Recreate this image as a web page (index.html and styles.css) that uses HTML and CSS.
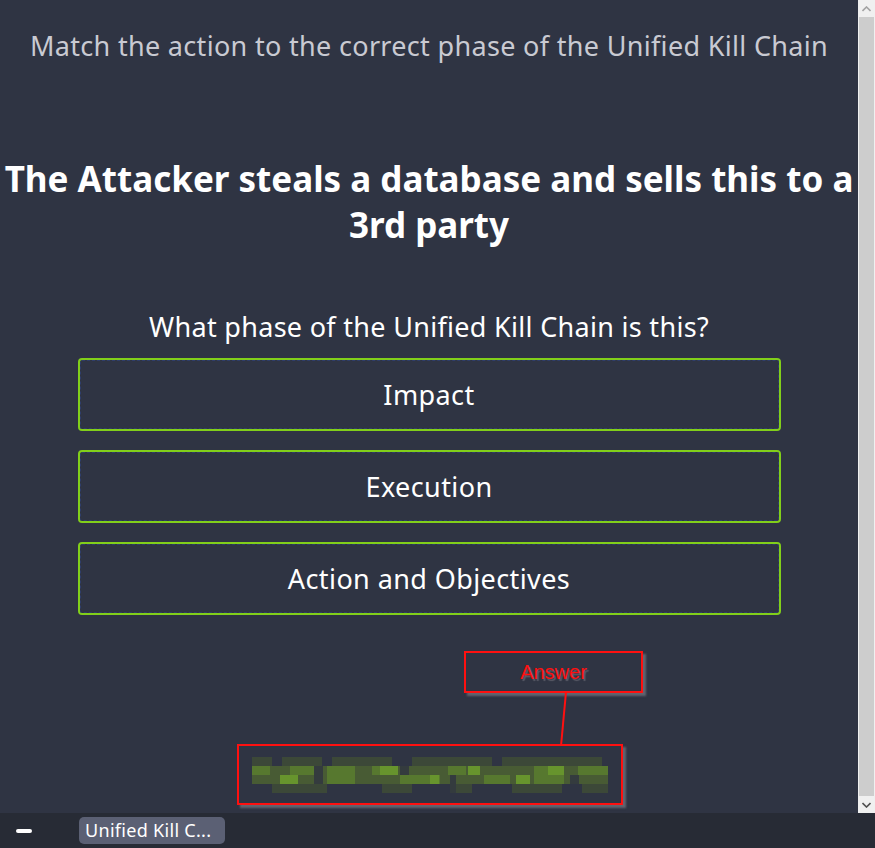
FILE: index.html
```html
<!DOCTYPE html>
<html>
<head>
<meta charset="utf-8">
<link rel="stylesheet" href="styles.css">
</head>
<body>
<div class="window">
  <div class="viewport">
    <main class="content">
      <p class="subtitle">Match the action to the correct phase of the Unified Kill Chain</p>
      <h1 class="scenario">The Attacker steals a database and sells this to a 3rd party</h1>
      <p class="question">What phase of the Unified Kill Chain is this?</p>
      <div class="options">
        <button class="option">Impact</button>
        <button class="option">Execution</button>
        <button class="option">Action and Objectives</button>
      </div>
      <div class="annotation">
        <div class="answer-label">Answer</div>
        <svg class="connector" width="20" height="54" viewBox="0 0 20 54"><line x1="12" y1="0" x2="7" y2="54" stroke="#ff1010" stroke-width="2"/></svg>
        <div class="answer-box">
          <svg class="pixels" width="356" height="36" viewBox="0 0 356 36" shape-rendering="crispEdges">
            <g fill="#4a5e34">
              <rect x="0" y="9" width="356" height="18"/>
            </g>
            <g fill="#3d4a38">
              <rect x="0" y="0" width="20" height="9"/><rect x="30" y="0" width="40" height="9"/><rect x="80" y="0" width="60" height="9"/><rect x="160" y="0" width="80" height="9"/><rect x="250" y="0" width="100" height="9"/>
              <rect x="20" y="27" width="55" height="9"/><rect x="130" y="27" width="30" height="9"/><rect x="200" y="27" width="20" height="9"/><rect x="260" y="27" width="50" height="9"/><rect x="330" y="27" width="26" height="9"/>
            </g>
            <g fill="#5a7c2e">
              <rect x="0" y="9" width="18" height="9"/><rect x="38" y="9" width="28" height="9"/><rect x="75" y="9" width="28" height="18"/><rect x="120" y="9" width="18" height="9"/><rect x="148" y="18" width="40" height="9"/><rect x="196" y="9" width="18" height="9"/><rect x="232" y="18" width="26" height="9"/><rect x="282" y="9" width="30" height="18"/><rect x="326" y="9" width="30" height="9"/>
            </g>
            <g fill="#6a9a2c">
              <rect x="28" y="18" width="18" height="9"/><rect x="128" y="9" width="18" height="9"/><rect x="178" y="18" width="9" height="9"/><rect x="216" y="9" width="12" height="9"/><rect x="296" y="9" width="16" height="9"/><rect x="264" y="18" width="14" height="9"/>
            </g>
            <g fill="#353c3e">
              <rect x="62" y="9" width="9" height="18"/><rect x="148" y="9" width="9" height="9"/><rect x="198" y="18" width="6" height="18"/><rect x="318" y="18" width="9" height="9"/>
            </g>
          </svg>
        </div>
      </div>
    </main>
    <div class="scrollbar">
      <div class="sb-arrow">
        <svg width="9" height="6" viewBox="0 0 9 6"><path d="M0.5 5 L4.5 1 L8.5 5" fill="none" stroke="#a3a3a3" stroke-width="1.6"/></svg>
      </div>
      <div class="sb-thumb"></div>
      <div class="sb-arrow">
        <svg width="9" height="6" viewBox="0 0 9 6"><path d="M0.5 1 L4.5 5 L8.5 1" fill="none" stroke="#505050" stroke-width="1.6"/></svg>
      </div>
    </div>
  </div>
  <footer class="taskbar">
    <span class="dash"></span>
    <span class="tab">Unified Kill C...</span>
  </footer>
</div>
</body>
</html>
```

FILE: styles.css
```css
html, body {
  margin: 0;
  padding: 0;
  height: 100%;
}
body {
  background: #2f3443;
  font-family: "Noto Sans", "Open Sans", sans-serif;
  overflow: hidden;
}
.window {
  display: flex;
  flex-direction: column;
  width: 875px;
  height: 848px;
}
.viewport {
  display: flex;
  flex: 1;
  min-height: 0;
}
.content {
  flex: 1;
  display: flex;
  flex-direction: column;
  align-items: center;
  background: #2f3443;
}
.subtitle {
  margin: 28px 0 0;
  font-size: 27px;
  line-height: 36px;
  font-weight: 400;
  color: #c9cad2;
  letter-spacing: 0.32px;
  white-space: nowrap;
}
.scenario {
  margin: 92px 0 0;
  width: 858px;
  font-size: 35px;
  line-height: 46px;
  font-weight: 700;
  color: #ffffff;
  text-align: center;
  letter-spacing: 0;
}
.question {
  margin: 61px 0 0;
  font-size: 27px;
  line-height: 36px;
  color: #ffffff;
  letter-spacing: 0.3px;
}
.options {
  display: flex;
  flex-direction: column;
  gap: 19px;
  margin-top: 13px;
  width: 703px;
}
.option {
  height: 73px;
  background: #2f3443;
  border: 2px solid #82cf1a;
  outline: 1px dashed #2f3d6a;
  outline-offset: -3px;
  border-radius: 4px;
  color: #ffffff;
  font-family: "Noto Sans", "Open Sans", sans-serif;
  font-size: 27px;
  letter-spacing: 0.4px;
  padding: 0;
}
.annotation {
  position: relative;
  width: 858px;
  height: 180px;
}
.answer-label {
  position: absolute;
  left: 464px;
  top: 36px;
  box-sizing: border-box;
  height: 42px;
  width: 179px;
  border: 2px solid #ff1010;
  box-shadow: 3px 3px 2px rgba(140, 140, 150, 0.55);
  color: #ff1010;
  font-family: "Liberation Sans", Arial, sans-serif;
  font-size: 20px;
  display: flex;
  align-items: center;
  justify-content: center;
  text-shadow: 2px 2px 1px rgba(120, 120, 130, 0.6);
}
.connector {
  position: absolute;
  left: 554px;
  top: 77px;
}
.answer-box {
  position: absolute;
  left: 237px;
  top: 129px;
  width: 386px;
  height: 61px;
  box-sizing: border-box;
  border: 2px solid #ff1010;
  box-shadow: 3px 3px 2px rgba(140, 140, 150, 0.55);
  display: flex;
  align-items: center;
  justify-content: center;
}
.pixels {
  display: block;
  opacity: 0.95;
}
.scrollbar {
  width: 17px;
  display: flex;
  flex-direction: column;
  background: #f0f0f0;
}
.sb-arrow {
  height: 17px;
  display: flex;
  align-items: center;
  justify-content: center;
  background: #f0f0f0;
}
.sb-thumb {
  flex: 1;
  margin: 0 1px;
  background: #cdcdcd;
}
.taskbar {
  height: 35px;
  background: #272b35;
  display: flex;
  align-items: center;
  padding-left: 16px;
  gap: 47px;
}
.dash {
  width: 16px;
  height: 4px;
  border-radius: 2px;
  background: #ffffff;
}
.tab {
  height: 27px;
  padding: 0 8px 0 6px;
  background: #5b6074;
  border-radius: 5px;
  color: #ffffff;
  font-family: "Noto Sans", "Open Sans", sans-serif;
  font-size: 18px;
  letter-spacing: 0.3px;
  line-height: 27px;
  box-sizing: border-box;
  width: 146px;
  white-space: nowrap;
  overflow: hidden;
}
```
